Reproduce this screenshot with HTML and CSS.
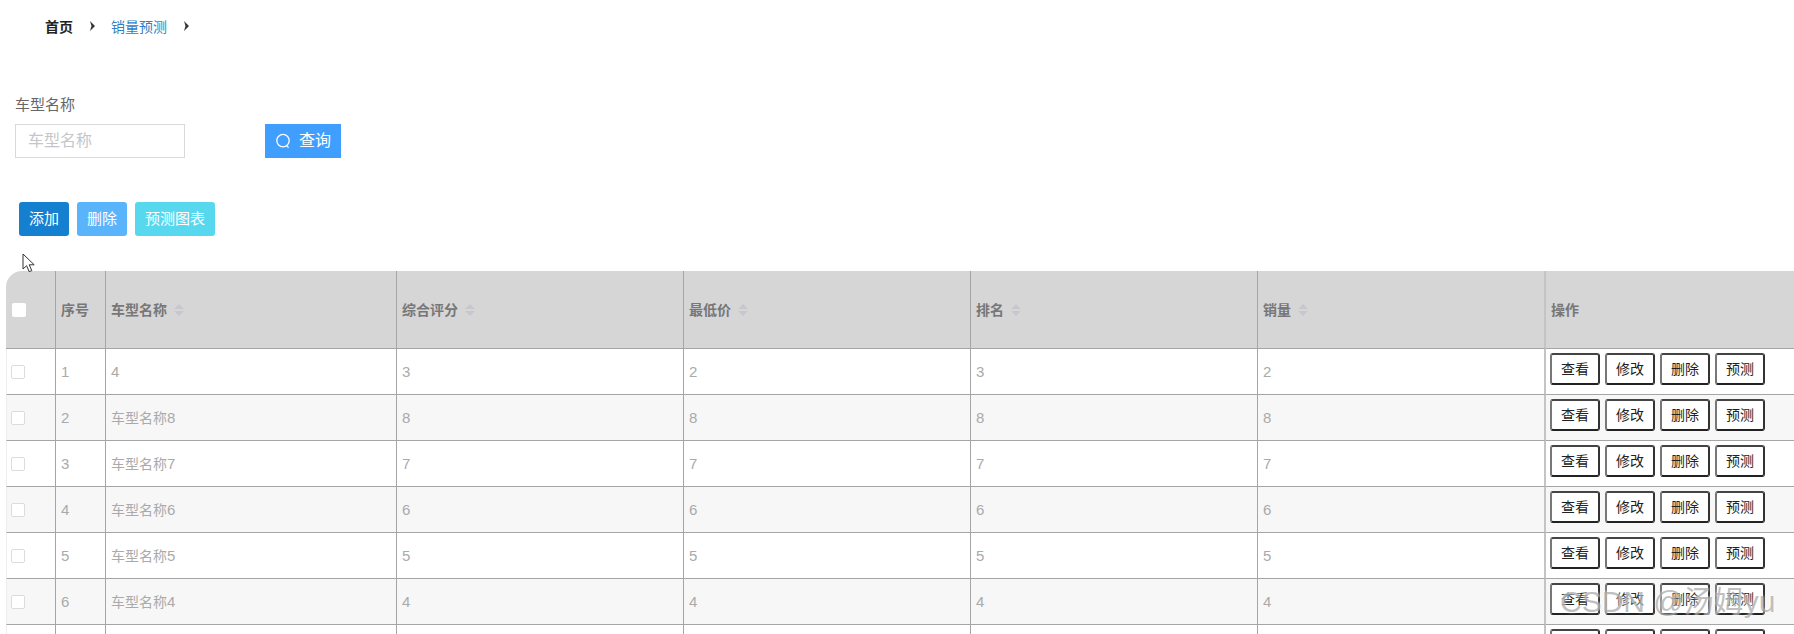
FILE: index.html
```html
<!DOCTYPE html>
<html lang="en">
<head>
    <meta charset="UTF-8">
    <title>销量预测</title>
    <link rel="stylesheet" href="styles.css">
</head>
<body>
    <div class="crumbs">
        <span class="crumb-home">首页</span>
        <svg class="crumb-arrow" viewBox="0 0 6 10" width="6" height="10"><path d="M1 0l5 5-5 5 1.5-5z" fill="#333"/></svg>
        <span class="crumb-link">销量预测</span>
        <svg class="crumb-arrow" viewBox="0 0 6 10" width="6" height="10"><path d="M1 0l5 5-5 5 1.5-5z" fill="#333"/></svg>
    </div>

    <form class="search">
        <div class="search-field">
            <label class="search-label">车型名称</label>
            <input class="search-input" type="text" placeholder="车型名称">
        </div>
        <button class="search-btn" type="button">
            <svg class="search-icon" viewBox="0 0 16 16" width="16" height="16">
                <circle cx="8" cy="7.6" r="6.2" fill="none" stroke="#fff" stroke-width="1.3"/>
                <path d="M11.6 12.6l2 2" stroke="#fff" stroke-width="1.3" fill="none"/>
            </svg>
            <span class="search-text">查询</span>
        </button>
    </form>

    <div class="actions">
        <button class="act act-add" type="button">添加</button>
        <button class="act act-del" type="button">删除</button>
        <button class="act act-chart" type="button">预测图表</button>
    </div>

    <table class="list">
        <colgroup>
            <col class="c-check"><col class="c-index"><col class="c-name"><col class="c-mid"><col class="c-mid"><col class="c-mid"><col class="c-last"><col class="c-ops">
        </colgroup>
        <thead>
            <tr>
                <th><input class="check check-head" type="checkbox"></th>
                <th>序号</th>
                <th>车型名称<i class="sort"></i></th>
                <th>综合评分<i class="sort"></i></th>
                <th>最低价<i class="sort"></i></th>
                <th>排名<i class="sort"></i></th>
                <th>销量<i class="sort"></i></th>
                <th>操作</th>
            </tr>
        </thead>
        <tbody>
            <tr>
                <td><input class="check" type="checkbox"></td>
                <td class="num">1</td><td class="num">4</td><td class="num">3</td><td class="num">2</td><td class="num">3</td><td class="num">2</td>
                <td class="ops"><button type="button">查看</button><button type="button">修改</button><button type="button">删除</button><button type="button">预测</button></td>
            </tr>
            <tr>
                <td><input class="check" type="checkbox"></td>
                <td class="num">2</td><td>车型名称<span class="num">8</span></td><td class="num">8</td><td class="num">8</td><td class="num">8</td><td class="num">8</td>
                <td class="ops"><button type="button">查看</button><button type="button">修改</button><button type="button">删除</button><button type="button">预测</button></td>
            </tr>
            <tr>
                <td><input class="check" type="checkbox"></td>
                <td class="num">3</td><td>车型名称<span class="num">7</span></td><td class="num">7</td><td class="num">7</td><td class="num">7</td><td class="num">7</td>
                <td class="ops"><button type="button">查看</button><button type="button">修改</button><button type="button">删除</button><button type="button">预测</button></td>
            </tr>
            <tr>
                <td><input class="check" type="checkbox"></td>
                <td class="num">4</td><td>车型名称<span class="num">6</span></td><td class="num">6</td><td class="num">6</td><td class="num">6</td><td class="num">6</td>
                <td class="ops"><button type="button">查看</button><button type="button">修改</button><button type="button">删除</button><button type="button">预测</button></td>
            </tr>
            <tr>
                <td><input class="check" type="checkbox"></td>
                <td class="num">5</td><td>车型名称<span class="num">5</span></td><td class="num">5</td><td class="num">5</td><td class="num">5</td><td class="num">5</td>
                <td class="ops"><button type="button">查看</button><button type="button">修改</button><button type="button">删除</button><button type="button">预测</button></td>
            </tr>
            <tr>
                <td><input class="check" type="checkbox"></td>
                <td class="num">6</td><td>车型名称<span class="num">4</span></td><td class="num">4</td><td class="num">4</td><td class="num">4</td><td class="num">4</td>
                <td class="ops"><button type="button">查看</button><button type="button">修改</button><button type="button">删除</button><button type="button">预测</button></td>
            </tr>
            <tr>
                <td></td><td></td><td></td><td></td><td></td><td></td><td></td>
                <td class="ops"><span class="btn-stub"></span><span class="btn-stub"></span><span class="btn-stub"></span><span class="btn-stub"></span></td>
            </tr>
        </tbody>
    </table>

    <!-- mouse pointer caught in the capture -->
    <svg class="pointer" viewBox="0 0 14 20" width="14" height="20">
        <path d="M1 1v15l3.6-3.3 2.6 6 2.6-1.1-2.6-5.8h5z" fill="#fff" stroke="#333" stroke-width="1"/>
    </svg>

    <div class="watermark">CSDN @汤姆yu</div>
</body>
</html>
```

FILE: styles.css
```css
html, body {
    height: 634px;
    overflow: hidden;
}

body {
    margin: 0;
    position: relative;
    background: #fff;
    font-family: "Liberation Sans", "Noto Sans CJK SC", sans-serif;
    font-size: 14px;
    color: #666;
}

/* breadcrumb */
.crumbs {
    display: flex;
    align-items: center;
    height: 20px;
    padding: 16px 0 0 45px;
    font-size: 14px;
}

.crumb-home {
    color: #222;
    font-weight: bold;
}

.crumb-link {
    color: #2f80c4;
}

.crumb-arrow {
    margin: 0 16px;
}

/* search form */
.search {
    display: flex;
    align-items: flex-end;
    gap: 80px;
    margin-top: 58px;
    padding-left: 15px;
}

.search-field {
    display: flex;
    flex-direction: column;
    gap: 8px;
}

.search-label {
    font-size: 15px;
    line-height: 22px;
    color: #666;
}

.search-input {
    box-sizing: border-box;
    width: 170px;
    height: 34px;
    padding: 0 12px;
    border: 1px solid #d9d9dc;
    font-family: inherit;
    font-size: 16px;
    outline: none;
}

.search-input::placeholder {
    color: #c4c6cb;
}

.search-btn {
    display: flex;
    align-items: center;
    justify-content: center;
    gap: 8px;
    width: 76px;
    height: 34px;
    padding: 0;
    border: none;
    background: #409eff;
    color: #fff;
    font-family: inherit;
    font-size: 16px;
}

.search-text {
    margin-top: -4px;
}

/* top buttons */
.actions {
    display: flex;
    gap: 8px;
    margin-top: 44px;
    padding-left: 19px;
}

.act {
    height: 34px;
    padding: 0 0 3px;
    border: none;
    border-radius: 3px;
    color: #fff;
    font-family: inherit;
    font-size: 15px;
}

.act-add {
    width: 50px;
    background: #1580d0;
}

.act-del {
    width: 50px;
    background: #5ab4fb;
}

.act-chart {
    width: 80px;
    background: #58d8ee;
}

/* table */
.list {
    width: 1810px;
    margin: 35px 0 0 6px;
    border-collapse: separate;
    border-spacing: 0;
    table-layout: fixed;
}

.c-check, .c-index {
    width: 50px;
}

.c-name {
    width: 291px;
}

.c-mid {
    width: 287px;
}

.c-last {
    width: 288px;
}

.list th, .list td {
    box-sizing: border-box;
    padding: 0 5px;
    border-right: 1px solid #a5a5a5;
    border-bottom: 1px solid #a5a5a5;
    text-align: left;
    vertical-align: middle;
}

.list th {
    height: 78px;
    padding-bottom: 1px;
    background: #d6d6d7;
    color: #777;
    font-size: 14px;
    font-weight: bold;
}

.list th:first-child {
    padding-top: 2px;
    border-top-left-radius: 16px;
}

.list th:nth-child(7), .list td:nth-child(7) {
    border-right: 2px solid #c4c4c4;
}

.list td {
    height: 46px;
    padding-bottom: 1px;
    color: #aaa;
    font-size: 14px;
}

.list td.num, .list .num {
    font-size: 15px;
}

.list td:first-child {
    border-left: 1px solid #eee;
    padding-top: 2px;
    padding-left: 4px;
}

.list tbody tr:nth-child(even) td {
    background: #f7f7f7;
}

.check {
    appearance: none;
    display: block;
    box-sizing: border-box;
    width: 14px;
    height: 14px;
    margin: 0;
    border: 1px solid #dcdcdc;
    border-radius: 2px;
    background: #fff;
}

.check-head {
    margin-left: 1px;
    border: none;
}

.sort {
    display: inline-block;
    position: relative;
    width: 10px;
    height: 12px;
    margin-left: 7px;
    vertical-align: -1px;
}

.sort::before, .sort::after {
    content: "";
    position: absolute;
    left: 0;
    border-left: 5px solid transparent;
    border-right: 5px solid transparent;
}

.sort::before {
    top: 0;
    border-bottom: 5px solid #c6c8ce;
}

.sort::after {
    bottom: 0;
    border-top: 5px solid #c6c8ce;
}

.list .ops {
    padding: 4px 0 0 4px;
    vertical-align: top;
    white-space: nowrap;
}

.ops button, .btn-stub {
    display: inline-block;
    box-sizing: border-box;
    width: 50px;
    height: 32px;
    margin-right: 5px;
    padding: 0 0 3px;
    border: 2px solid;
    border-color: #444 #333 #222 #777;
    border-radius: 3px;
    background: #fff;
    color: #222;
    font-family: inherit;
    font-size: 14px;
    vertical-align: top;
}

/* things lying over the page */
.pointer {
    position: absolute;
    left: 22px;
    top: 253px;
}

.watermark {
    position: absolute;
    left: 1560px;
    top: 582px;
    color: rgba(150, 150, 150, 0.6);
    font-size: 30px;
    line-height: 40px;
    white-space: nowrap;
    text-shadow: 0 0 3px rgba(255, 255, 255, 0.9);
}
```
